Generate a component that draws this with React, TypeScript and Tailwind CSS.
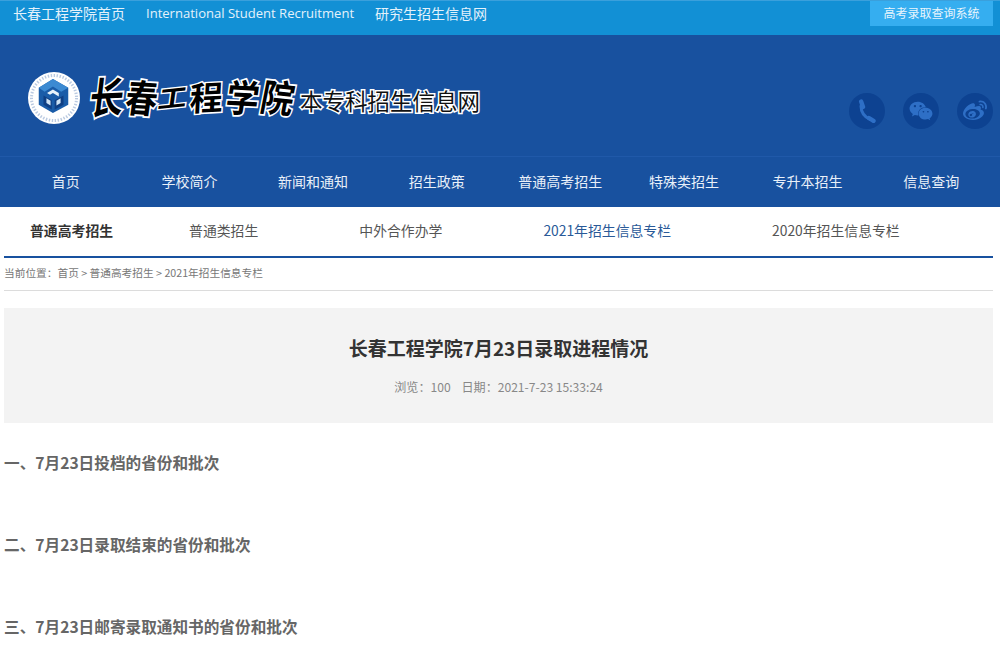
import { FaWeixin, FaWeibo } from "react-icons/fa";

const font = { fontFamily: '"Noto Sans CJK SC", "Open Sans", sans-serif' };

const topLinks = ["长春工程学院首页", "International Student Recruitment", "研究生招生信息网"];
const navItems = ["首页", "学校简介", "新闻和通知", "招生政策", "普通高考招生", "特殊类招生", "专升本招生", "信息查询"];
const headings = ["一、7月23日投档的省份和批次", "二、7月23日录取结束的省份和批次", "三、7月23日邮寄录取通知书的省份和批次"];

const brush = [
  { c: "长", w: "w-[38px]", s: "text-[34px] -skew-x-12 scale-y-[1.25] -rotate-3" },
  { c: "春", w: "w-[32px]", s: "text-[32px] -skew-x-6 scale-y-[1.2] rotate-3" },
  { c: "工", w: "w-[30px]", s: "text-[29px] -skew-x-12 scale-y-[0.85] -rotate-6" },
  { c: "程", w: "w-[37px]", s: "text-[33px] -skew-x-6 -rotate-3" },
  { c: "学", w: "w-[36px]", s: "text-[33px] -skew-x-6 scale-y-[1.15] rotate-3" },
  { c: "院", w: "w-[34px]", s: "text-[33px] -skew-x-6 scale-y-[1.15] rotate-6" },
];

function Logo() {
  return (
    <svg width="54" height="54" viewBox="0 0 54 54" className="mt-[4px] shrink-0">
      <circle cx="27" cy="27" r="26" fill="#fff" />
      <circle cx="27" cy="27" r="22.5" fill="none" stroke="#9db4d4" strokeWidth="3" strokeDasharray="1.4 1.6" opacity="0.7" />
      <g transform="translate(26.5 25) scale(1.18) translate(-26.5 -26.5)">
        <path d="M26 12 L39 19.5 L39 34 L26 41 L14 34 L14 19.5 Z" fill="#1a5ca8" />
        <path d="M26 12 L39 19.5 L33 23 L26 18.5 L19 23 L14 19.5 Z" fill="#3c8ad2" />
        <path d="M21 24 L26 21 L31 24 L31 27 L26 24 L23.5 25.5 Z" fill="#e8f3fb" />
        <path d="M18 26 L25 30 L25 38 L18 34 Z" fill="#0f3f84" />
        <path d="M35 26 L27.5 30 L27.5 38 L35 34 Z" fill="#0f3f84" />
        <path d="M20.5 28.5 L24 30.5 L24 34.5 L20.5 32.5 Z" fill="#cfe3f5" />
        <path d="M32.5 28.5 L29 30.5 L29 34.5 L32.5 32.5 Z" fill="#cfe3f5" />
      </g>
    </svg>
  );
}

function CircleIcon({ children }: { children: React.ReactNode }) {
  return (
    <div className="flex h-9 w-9 items-center justify-center rounded-full bg-[#0d4291] text-[#2e6fc6]">
      {children}
    </div>
  );
}

function PhoneGlyph() {
  return (
    <svg width="24" height="24" viewBox="0 0 24 24" fill="none" stroke="currentColor" strokeLinecap="round">
      <path d="M6 7 C6 13 10 18 15 20.5" strokeWidth="3" />
      <path d="M6.2 2.6 L8 8" strokeWidth="4.4" />
      <path d="M14 19 L18.5 21.8" strokeWidth="4.4" />
    </svg>
  );
}

export default function App() {
  return (
    <div className="h-[652px] w-[1000px] overflow-hidden bg-white" style={font}>
      {/* top bar */}
      <div className="flex h-[35px] items-start border-t border-[#3aa0dc] bg-[#1290d5] pl-[13px] pr-[7px]">
        <div className="flex h-[23px] items-center gap-[21px] text-[14px] leading-none text-[#e4f2fb]">
          {topLinks.map((t) => (
            <span
              key={t}
              className="whitespace-nowrap"
              style={t.startsWith("Inter") ? { fontFamily: '"Open Sans", sans-serif', fontSize: "13.05px", paddingTop: "2px" } : undefined}
            >
              {t}
            </span>
          ))}
        </div>
        <div className="ml-auto flex h-[25px] w-[123px] items-center justify-center bg-[#35aef0] pb-[2px] text-[12px] leading-none text-[#e8f5fd]">
          高考录取查询系统
        </div>
      </div>

      {/* header */}
      <div className="flex h-[122px] items-center border-b border-[#2059a9] bg-[#18519f] pl-[27px] pr-[7px]">
        <Logo />
        <div className="ml-[7px] flex items-center">
          <div className="flex items-center">
            {brush.map((b) => (
              <span
                key={b.c}
                className={`${b.w} ${b.s} flex justify-center font-bold leading-[44px] text-black [-webkit-text-stroke:3px_white] [paint-order:stroke_fill]`}
              >
                {b.c}
              </span>
            ))}
          </div>
          <span className="ml-[5px] mt-[8px] whitespace-nowrap text-[22.5px] leading-[30px] text-[#111] [-webkit-text-stroke:3px_white] [paint-order:stroke_fill]">
            本专科招生信息网
          </span>
        </div>
        <div className="ml-auto mt-[30px] flex gap-[18px]">
          <CircleIcon>
            <PhoneGlyph />
          </CircleIcon>
          <CircleIcon>
            <FaWeixin size={24} />
          </CircleIcon>
          <CircleIcon>
            <FaWeibo size={24} />
          </CircleIcon>
        </div>
      </div>

      {/* nav */}
      <div className="h-[50px] bg-[#18519f] px-[4px]">
        <div className="grid h-full w-[989px] grid-cols-8 items-center pb-[2px] text-center text-[14px] leading-none text-[#e9f0f9]">
          {navItems.map((n) => (
            <span key={n}>{n}</span>
          ))}
        </div>
      </div>

      {/* content */}
      <div className="mx-[4px] w-[989px]">
        <div className="flex h-[51px] items-center border-b-2 border-[#18519f] pl-[26px] pb-[2px] text-[13.85px] leading-none text-[#555]">
          <span className="mr-[76px] font-bold text-[#333]">普通高考招生</span>
          <div className="flex gap-[101px]">
            <span>普通类招生</span>
            <span>中外合作办学</span>
            <span className="text-[#2a5a98]">2021年招生信息专栏</span>
            <span>2020年招生信息专栏</span>
          </div>
        </div>

        <div className="flex h-[33px] items-center border-b border-[#dcdcdc] pb-[2px] text-[10.7px] leading-none text-[#777]">
          当前位置：首页 &gt; 普通高考招生 &gt; 2021年招生信息专栏
        </div>

        <div className="mt-[17px] flex h-[115px] flex-col items-center bg-[#f3f3f3]">
          <h1 className="mt-[28px] text-[19px] font-bold leading-[24px] text-[#333]">长春工程学院7月23日录取进程情况</h1>
          <p className="mt-[19px] text-[12.1px] leading-[16px] text-[#888]">
            浏览：100&nbsp;&nbsp;&nbsp;&nbsp;日期：2021-7-23 15:33:24
          </p>
        </div>

        <div className="mt-[28px] flex flex-col gap-[58px]">
          {headings.map((h) => (
            <p key={h} className="text-[15.65px] font-bold leading-[24px] text-[#666]">
              {h}
            </p>
          ))}
        </div>
      </div>
    </div>
  );
}
